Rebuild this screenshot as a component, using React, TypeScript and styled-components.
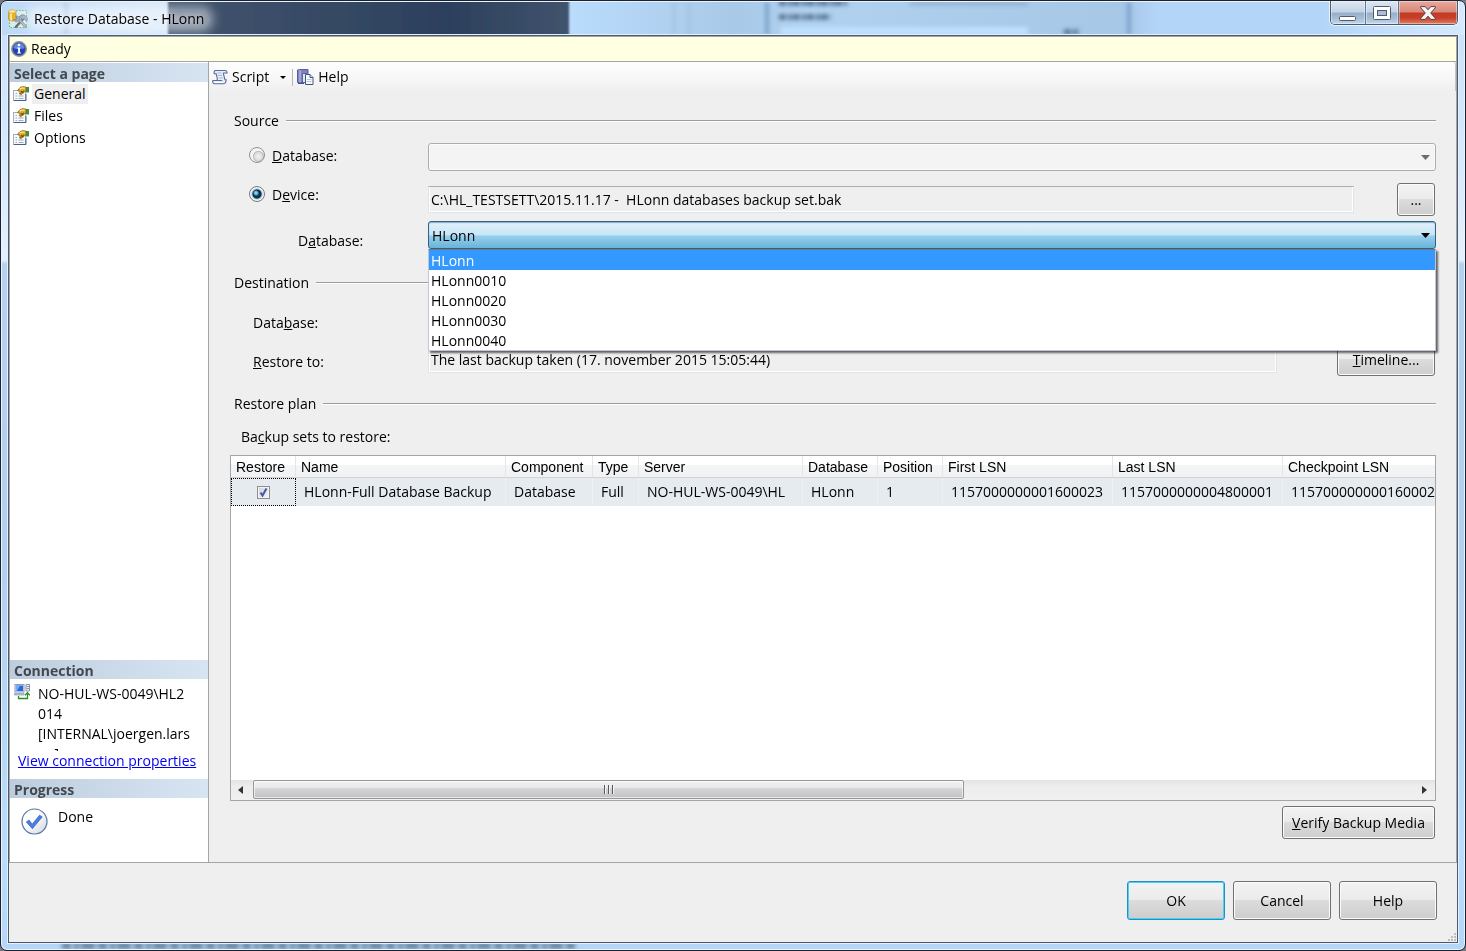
import React from "react";
import styled, { createGlobalStyle, css } from "styled-components";

const GlobalStyle = createGlobalStyle`
  *, *::before, *::after { box-sizing: border-box; }
  html { background: #77797d; }
  body {
    margin: 0;
    color: #000;
    font-family: "Open Sans", "Noto Sans", sans-serif;
    font-size: 14px;
    line-height: 20px;
  }
  button, input, select { font: inherit; color: inherit; }
`;

/* ---------- window frame ---------- */

const Frame = styled.div`
  position: relative;
  display: flex;
  flex-direction: column;
  min-height: 100vh;
  padding: 0 7px 7px;
  border: 1px solid #1b2130;
  border-radius: 7px;
  overflow: hidden;
  background: linear-gradient(#c9e0fa 0, #d3e7fc 120px, #e4f0fd 259px, #b4d1f0 263px, #b2d0ef 60%, #bbdcfc 90%, #b5d6f7 100%);
  box-shadow: inset 0 0 0 1px #eaf5ff;
`;

const Backdrop = styled.svg`
  position: absolute;
  left: 1px;
  width: 1462px;
`;

const TopBackdrop = styled(Backdrop)`
  top: 1px;
  height: 33px;
`;

const BottomBackdrop = styled(Backdrop)`
  bottom: 1px;
  height: 6px;
`;

const TitleBar = styled.header`
  position: relative;
  display: flex;
  align-items: flex-start;
  height: 34px;
`;

const Title = styled.h1`
  display: flex;
  flex: 1;
  align-items: center;
  gap: 6px;
  height: 34px;
  margin: 0;
  padding-top: 2px;
  font-size: 14px;
  font-weight: 400;
`;

const TitleText = styled.span`
  padding: 0 6px;
  margin-left: -6px;
  border-radius: 10px;
  background: rgba(255, 255, 255, 0.35);
  box-shadow: 0 0 10px 4px rgba(255, 255, 255, 0.4);
  text-shadow: 0 0 8px #fff, 0 0 8px #fff;
`;

const WindowControls = styled.div`
  display: flex;
  height: 24px;
  border: 1px solid #4a5a70;
  border-top: 0;
  border-radius: 0 0 5px 5px;
  overflow: hidden;
  box-shadow: 0 0 0 1px rgba(255, 255, 255, 0.7);
`;

const WindowButton = styled.button<{ $close?: boolean; $wide?: boolean }>`
  display: flex;
  align-items: center;
  justify-content: center;
  width: ${(p) => (p.$close ? 58 : p.$wide ? 35 : 33)}px;
  padding: 0;
  border: 0;
  border-right: ${(p) => (p.$close ? "0" : "1px solid #66788f")};
  background: ${(p) =>
    p.$close
      ? "linear-gradient(#e9a99c 0, #d9877a 48%, #c23a22 52%, #c9402a 75%, #dd8263 100%)"
      : "linear-gradient(#dce7f3 0, #c3d3e5 48%, #97b0ca 52%, #a5bcd6 75%, #c4d9ee 100%)"};
  box-shadow: inset 0 0 0 1px rgba(255, 255, 255, 0.4);
`;

const Client = styled.main`
  position: relative;
  display: flex;
  flex: 1;
  flex-direction: column;
  border: 1px solid #4f5b6b;
  background: #efefef;
  box-shadow: 0 0 0 1px #e2f1ff;
`;

const Body = styled.div`
  display: flex;
  flex: 1;
  flex-direction: column;
  border: 1px solid #a3a5ab;
`;

const StatusBar = styled.div`
  display: flex;
  align-items: center;
  gap: 4px;
  height: 25px;
  padding-left: 1px;
  border-bottom: 1px solid #a3a5ab;
  background: #ffffe1;
`;

const Columns = styled.div`
  display: flex;
  flex: 1;
`;

/* ---------- side panel ---------- */

const Sidebar = styled.aside`
  display: flex;
  flex-direction: column;
  width: 199px;
  padding-top: 1px;
  border-right: 1px solid #a3a5ab;
  background: #fff;
`;

const SectionTitle = styled.h2`
  height: 19px;
  margin: 0;
  padding-left: 4px;
  background: linear-gradient(90deg, #becddd, #d7e5f3);
  color: #40494f;
  font-size: 14px;
  font-weight: 700;
  line-height: 22px;
`;

const PageList = styled.nav`
  display: flex;
  flex: 1;
  flex-direction: column;
  gap: 2px;
  padding: 2px 3px;
`;

const PageLink = styled.a<{ $active?: boolean }>`
  display: flex;
  gap: 3px;
  align-items: center;
  height: 20px;
  color: #000;
  text-decoration: none;

  span {
    padding: 0 2px;
    background: ${(p) => (p.$active ? "#efefef" : "none")};
  }
`;

const Connection = styled.div`
  display: flex;
  align-items: flex-start;
  gap: 8px;
  height: 67px;
  margin-top: 5px;
  padding-left: 4px;
  overflow: hidden;

  p {
    width: 160px;
    margin: 0;
    white-space: pre;
  }
  svg { flex: none; }
`;

const ConnectionRow = styled.div`
  height: 28px;
  padding-left: 8px;
  white-space: nowrap;

  a { color: #0000f0; }
`;

const Progress = styled.div`
  display: flex;
  gap: 10px;
  height: 64px;
  padding: 9px 11px;

  svg { margin-top: 1px; }
`;

/* ---------- page content ---------- */

const Content = styled.section`
  display: flex;
  flex: 1;
  flex-direction: column;
  min-width: 0;
`;

const Toolbar = styled.div`
  display: flex;
  align-items: center;
  height: 29px;
  padding: 1px 0 0 3px;
  border-right: 1px solid #c4c4c4;
  border-radius: 0 3px 0 0;
  background: linear-gradient(#fdfdfd, #f8f8f8 50%, #efefef);
`;

const ToolButton = styled.button`
  display: flex;
  align-items: center;
  gap: 4px;
  padding: 0;
  border: 0;
  background: none;

  .arrow { margin-left: 7px; }
`;

const ToolDivider = styled.span`
  width: 1px;
  height: 17px;
  margin: 0 4px 0 6px;
  background: #b5b5b5;
`;

const Form = styled.form`
  display: flex;
  flex: 1;
  flex-direction: column;
  padding: 20px 20px 23px 25px;
`;

const GroupTitle = styled.h3<{ $top?: number }>`
  display: flex;
  align-items: center;
  gap: 7px;
  margin: ${(p) => p.$top || 0}px 0 0;
  font-size: 14px;
  font-weight: 400;

  &::after {
    content: "";
    flex: 1;
    height: 2px;
    border-top: 1px solid #9c9c9c;
    background: #fff;
  }
`;

const Row = styled.div<{ $top: number; $height: number }>`
  display: grid;
  grid-template-columns: 194px 1fr;
  align-items: start;
  height: ${(p) => p.$height}px;
  margin-top: ${(p) => p.$top}px;
`;

const Label = styled.label<{ $indent: number; $top: number }>`
  display: flex;
  gap: 7px;
  padding: ${(p) => p.$top}px 0 0 ${(p) => p.$indent}px;
`;

const Radio = styled.input`
  appearance: none;
  width: 16px;
  height: 16px;
  margin: 1px 0 0;
  border: 1px solid #8e8f8f;
  border-radius: 50%;
  background: radial-gradient(circle at 60% 60%, #f4f4f4 0, #d9dbdc 4px, #b9bcbf 5px, #f6f6f6 6px);

  &:checked {
    border-color: #6d7a85;
    background: radial-gradient(circle at 6px 6px, #b6ecff 0, #35a3d0 2px, transparent 3px),
      radial-gradient(circle, #164a6f 0, #0d2a44 4px, #a8b6c0 5px, #f6f6f6 6px);
  }
`;

const Field = styled.div`
  display: flex;
  align-items: center;
  justify-content: space-between;
  height: 33px;
  padding-right: 1px;
`;

const ReadOnlyInput = styled.input<{ $gap: number }>`
  flex: 1;
  height: 27px;
  min-width: 0;
  margin-right: ${(p) => p.$gap}px;
  padding: 0 2px;
  border: 1px solid #dfe3ec;
  border-top-color: #abadb3;
  background: #efefef;
  box-shadow: inset -1px -1px 0 #fff, inset 1px 0 0 #fff;
  outline: 0;
`;

const Combo = styled.div`
  position: relative;
  height: 28px;

  > svg {
    position: absolute;
    top: 12px;
    right: 6px;
    pointer-events: none;
  }
`;

const Select = styled.select<{ $open?: boolean }>`
  appearance: none;
  display: block;
  width: 100%;
  height: 28px;
  padding: 2px 3px 0;
  border: 1px solid #acacac;
  border-radius: 3px;
  background: #f4f4f4;
  box-shadow: inset 0 0 0 1px #fbfbfb;
  outline: 0;
  opacity: 1;

  ${(p) =>
    p.$open &&
    css`
      border-color: #2c628b;
      background: linear-gradient(#e3f1fa 0, #c7e6f6 50%, #98d0ec 53%, #68b3db 100%);
      box-shadow: inset 0 1px 1px #88a9c0;
    `}
`;

const Options = styled.ul`
  position: absolute;
  z-index: 2;
  top: 28px;
  left: 0;
  right: 0;
  margin: 0;
  padding: 0;
  border: 1px solid #c0c6d8;
  border-top-color: #777;
  background: #fff;
  box-shadow: 2px 2px 2px rgba(0, 0, 0, 0.6);
  list-style: none;
`;

const Option = styled.li<{ $selected?: boolean }>`
  height: 20px;
  padding: 0 2px;
  background: ${(p) => (p.$selected ? "#3399ff" : "none")};
  color: ${(p) => (p.$selected ? "#fff" : "#000")};
  line-height: 22px;
`;

const Button = styled.button<{ $width: number; $height?: number; $default?: boolean }>`
  width: ${(p) => p.$width}px;
  height: ${(p) => p.$height || 33}px;
  padding: 0;
  border: 1px solid ${(p) => (p.$default ? "#2a8dbd" : "#707070")};
  border-radius: 3px;
  background: linear-gradient(#f3f3f3 0, #ebebeb 48%, #dcdcdc 50%, #cdcdcd 100%);
  box-shadow: inset 0 0 0 1px ${(p) => (p.$default ? "#43d3fa" : "#fbfbfb")};
  white-space: nowrap;
`;

const TableCaption = styled.div`
  margin-top: 13px;
  padding-left: 7px;
`;

/* ---------- backup set grid ---------- */

const GridBox = styled.div`
  display: flex;
  flex: 1;
  flex-direction: column;
  min-height: 200px;
  margin: 8px 0 5px -4px;
  border: 1px solid #a3a5ab;
  background: #fff;
`;

const GridView = styled.div`
  flex: 1;
  overflow: hidden;
`;

const Table = styled.table`
  width: 1222px;
  table-layout: fixed;
  border-collapse: separate;
  border-spacing: 0;

  th, td {
    padding: 0 0 0 5px;
    overflow: hidden;
    text-align: left;
    white-space: nowrap;
    font-weight: 400;
    border-right: 1px solid #e3e5e8;
  }
  th {
    height: 22px;
    border-bottom: 1px solid #d0d2d5;
    background: linear-gradient(#fff 40%, #f4f5f7 45%, #f1f2f4);
    font-family: "Liberation Sans", sans-serif;
    font-size: 14px;
  }
  td {
    height: 28px;
    padding-left: 8px;
    border-right-color: #f0f0f0;
    background: #e6ebf0;
  }
  td:first-child {
    padding: 0;
    border: 1px dotted #000;
    text-align: center;
    line-height: 0;
  }
`;

const Checkbox = styled.input`
  appearance: none;
  width: 13px;
  height: 13px;
  margin: 0;
  border: 1px solid #8e8f8f;
  background: linear-gradient(135deg, #cfd4da, #f6f6f6);
  box-shadow: inset 0 0 0 1px #f4f4f4;
`;

const CheckWrap = styled.label`
  display: inline-grid;

  > * { grid-area: 1 / 1; }
  svg { pointer-events: none; }
`;

const ScrollBar = styled.div`
  display: flex;
  height: 20px;
  background: linear-gradient(#e3e3e3, #ededed 30%, #f0f0f0);
`;

const ScrollArrow = styled.button`
  display: flex;
  align-items: center;
  justify-content: center;
  width: 22px;
  padding: 0;
  border: 0;
  background: none;

  &:first-child { padding-right: 3px; }
`;

const ScrollTrack = styled.div`
  flex: 1;
`;

const ScrollThumb = styled.div`
  display: flex;
  align-items: center;
  justify-content: center;
  width: 61.3%;
  height: 19px;
  border: 1px solid #979797;
  border-radius: 2px;
  background: linear-gradient(#f3f3f3, #e8e8e9 40%, #d5d5d8 45%, #c2c2c6);
  box-shadow: inset 0 0 0 1px rgba(255, 255, 255, 0.6);
`;

const VerifyRow = styled.div`
  display: flex;
  justify-content: flex-end;
  padding-right: 1px;
`;

const Footer = styled.footer`
  display: flex;
  justify-content: flex-end;
  gap: 8px;
  height: 79px;
  padding: 18px 20px 0;
`;

const Grip = styled.svg`
  position: absolute;
  right: 0;
  bottom: 0;
`;

/* ---------- icons ---------- */

const AppIcon = () => (
  <svg width="20" height="20" viewBox="0 0 20 20" aria-hidden="true">
    <path d="M8 1.500H18.500V18.500H1.500V11" fill="#f4faf2" fillOpacity=".5" stroke="#5cc04c" strokeDasharray="1.500 1.500" />
    <path d="M.5 2.500v7.500c0 1.200 1.600 2 3.800 2s3.700-.8 3.700-2V2.500z" fill="#e8b42a" stroke="#b98714" strokeWidth=".6" />
    <path d="M2 4v7.300c.6.300 1.200.4 2 .4V4z" fill="#fbe58e" />
    <ellipse cx="4.200" cy="2.500" rx="3.700" ry="1.700" fill="#fbe9a0" stroke="#c49726" strokeWidth=".6" />
    <path d="M8 17.800l7.500-8" stroke="#70665c" strokeWidth="2.400" strokeLinecap="round" />
    <path d="M9.500 9L17.500 17.500" stroke="#8194a8" strokeWidth="2.800" strokeLinecap="round" />
    <path d="M10 9.500l7 7.500" stroke="#c9d5e2" strokeWidth=".9" strokeLinecap="round" />
    <path d="M5.500 10.500l2.800.2.800-1.200-1.200-2.500c1.800-.4 3.600.8 3.800 2.600.1 1.800-1.300 3.200-3 3.200-1.500 0-2.700-.9-3.200-2.300z" fill="#9fb0c3" stroke="#66798f" strokeWidth=".6" />
    <path d="M11.500 7.500c2-2.300 5-2.200 7 .3.700 1 1 2.200.8 3.700l-1.600.2-1-1.900-2.700.4z" fill="#98a9be" stroke="#5d7088" strokeWidth=".7" />
  </svg>
);

const InfoIcon = () => (
  <svg width="16" height="16" viewBox="0 0 16 16" aria-hidden="true">
    <circle cx="8" cy="8" r="7.200" fill="#2343b4" stroke="#8e9097" strokeWidth="1.500" />
    <path d="M2.300 7a5.800 5.800 0 0 1 11.400 0c-3 1.500-8.400 1.500-11.400 0z" fill="#5f86e0" />
    <circle cx="8" cy="4" r="1.300" fill="#fff" />
    <path d="M6.200 6.500H9v5h1v1.100H6.200v-1.100h.9V7.600h-.9z" fill="#fff" />
  </svg>
);

const PageIcon = () => (
  <svg width="16" height="16" viewBox="0 0 16 16" aria-hidden="true">
    <rect x=".5" y="4.500" width="12" height="10" fill="#f6f8fc" stroke="#a4adbb" />
    <path d="M1 14.500h12V8" fill="none" stroke="#4b5f80" />
    <path d="M2.500 7.500h1.500M2.500 10h1.500M2.500 12.500h1.500M5.500 10h5M5.500 12.500h5" stroke="#9aabc8" />
    <path d="M13 1h3v5.500h-3z" fill="#399448" />
    <path d="M4.500 4.500L7 1.600c2-1.200 4-1 6.200-.4v3.600L11 6 8.200 8.400 6.500 8l.8-2.400z" fill="#e0ac23" stroke="#7e5a09" strokeWidth=".8" />
    <path d="M6.800 3c1.500-1.200 3.200-1.200 5-.7" stroke="#fff0a5" strokeWidth="1.100" fill="none" />
    <path d="M7.500 7.600L11 4.800M8 5l2.500 2" stroke="#4d3706" strokeWidth=".8" />
  </svg>
);

const ScriptIcon = () => (
  <svg width="16" height="16" viewBox="0 0 16 16" aria-hidden="true">
    <path d="M3.500 1H13c1.500 0 2.300 1 2.200 2.500-.1.800-.5 1-1.200 1h-2c-.2 1.500 1 3 1 5h1c.8.500 1 1.500.6 3-.4 1.700-1.300 2.500-2.800 2.500H2.500C1 15 .3 13.800.6 12.200c.1-.6.400-.9 1-.9h3.200c.7-1.800-.6-3.300-1-5.300H2.500C1.200 5 1.300 1.500 3.500 1z" fill="#e6edf9" />
    <path d="M3 1.500h10.500c1 .2 1.700 1 1.600 2.500h-3.600c-.3 2 1.200 4 1.200 6.500M3 1.500c-1 .7-1.300 2.300-.5 3.300h1.700c.3 2.700 1.800 4.300.8 6.700M.8 11.500h9.500M.8 11.500c-.4 1.500.2 3 1.500 3.300h9.200c1.700-.2 2.600-1.800 2.700-4h-1.500" fill="none" stroke="#5a6c93" strokeWidth="1.100" />
    <path d="M5.500 4h4M6 6.500h4M7 9h4" stroke="#a4b5d8" />
    <path d="M2.500 13.500h8.500" stroke="#fff" />
  </svg>
);

const HelpIcon = () => (
  <svg width="17" height="16" viewBox="0 0 17 16" aria-hidden="true">
    <path d="M.5 1l2-.5h8.500v13H.5z" fill="#7f82c2" stroke="#595ca0" />
    <path d="M1 14.500h6" stroke="#4a4c8c" />
    <path d="M3 1v12.500" stroke="#c3c5ea" />
    <path d="M5.500 4.500H10l1 1v8H5.500z" fill="#dfe7f4" stroke="#57698c" />
    <path d="M8.500 5.500H13l3 3v7H8.500z" fill="#f8fafe" stroke="#41597f" />
    <path d="M13 5.500v3h3" fill="#ccd8ec" stroke="#41597f" />
    <path d="M10 10.500h4.500M10 12.500h4.500" stroke="#b6c4dc" />
  </svg>
);

const ServerIcon = () => (
  <svg width="16" height="16" viewBox="0 0 16 16" aria-hidden="true">
    <rect x="1" y=".5" width="9" height="7.500" fill="#dfe5f1" stroke="#8b9bbb" />
    <rect x="2" y="1.500" width="7" height="5.500" fill="#2569e0" />
    <path d="M2 1.500h4L3 7H2z" fill="#76acf7" />
    <path d="M.5 9.500h9.500v1.500H.5z" fill="#c3cbda" stroke="#8794b0" strokeWidth=".7" />
    <path d="M12 .5h3.500v6.500H12z" fill="#eef1f6" stroke="#8793a6" />
    <path d="M12.500 2.500h2.500M12.500 4.500h2.500" stroke="#8c99ad" />
    <path d="M4.500 12v2.500h9V9.500M11 11.300l2.500-2.700 2.400 2.700" fill="none" stroke="#2d8f1f" strokeWidth="1.300" />
  </svg>
);

const DoneIcon = () => (
  <svg width="27" height="27" viewBox="0 0 27 27" aria-hidden="true">
    <defs>
      <linearGradient id="done" x1="0" y1="0" x2="1" y2="1">
        <stop offset=".4" stopColor="#fff" />
        <stop offset="1" stopColor="#cfd3da" />
      </linearGradient>
    </defs>
    <circle cx="13.500" cy="13.500" r="12.500" fill="url(#done)" stroke="#5673a6" strokeWidth="1.200" />
    <path d="M5.300 14l2.700-2 3.200 4.200L18.600 7.200l2.600 1.700-9.800 11.800z" fill="#4a7ee4" stroke="#2c5cc0" strokeWidth=".7" />
  </svg>
);

const Arrow = ({ color = "#000" }: { color?: string }) => (
  <svg width="9" height="5" viewBox="0 0 9 5" aria-hidden="true">
    <path d="M0 0h9L4.500 5z" fill={color} />
  </svg>
);

/* ---------- data ---------- */

const pages = ["General", "Files", "Options"];
const databases = ["HLonn", "HLonn0010", "HLonn0020", "HLonn0030", "HLonn0040"];
const columns: [string, number, string][] = [
  ["Name", 210, "HLonn-Full Database Backup"],
  ["Component", 87, "Database"],
  ["Type", 46, "Full"],
  ["Server", 164, "NO-HUL-WS-0049\\HL"],
  ["Database", 75, "HLonn"],
  ["Position", 65, "1"],
  ["First LSN", 170, "1157000000001600023"],
  ["Last LSN", 170, "1157000000004800001"],
  ["Checkpoint LSN", 170, "115700000000160002"],
];

export default function App() {
  return (
    <>
      <GlobalStyle />
      <Frame>
        <TopBackdrop viewBox="0 0 1462 33" aria-hidden="true">
          <defs>
            <linearGradient id="glass">
              <stop offset="0" stopColor="#bcd9f8" />
              <stop offset=".1" stopColor="#d5e6f8" />
              <stop offset=".39" stopColor="#badcfc" />
              <stop offset=".5" stopColor="#a9c9e8" />
              <stop offset=".55" stopColor="#b1d1f1" />
              <stop offset=".77" stopColor="#a7c7e7" />
              <stop offset=".79" stopColor="#b3d5f8" />
              <stop offset=".9" stopColor="#b3d5f8" />
              <stop offset="1" stopColor="#d6e9fe" />
            </linearGradient>
            <linearGradient id="navy">
              <stop offset="0" stopColor="#43556f" />
              <stop offset=".7" stopColor="#2c405c" />
              <stop offset="1" stopColor="#41536d" />
            </linearGradient>
            <filter id="soft" x="-20%" y="-50%" width="140%" height="200%">
              <feGaussianBlur stdDeviation="2" />
            </filter>
            <filter id="edge" x="-2%" y="-20%" width="104%" height="140%">
              <feGaussianBlur stdDeviation="1" />
            </filter>
          </defs>
          <path d="M0 0h1462v33H0z" fill="url(#glass)" />
          <path d="M166 -5h401v43H166z" fill="url(#navy)" filter="url(#edge)" />
          <g filter="url(#soft)">
            <path d="M62 0h4v33h-4zM671 0h2v33h-2zM686 0h2v33h-2z" fill="#94b2d0" opacity=".6" />
            <path d="M763 0h4v33h-4zM1125 0h4v33h-4z" fill="#7ba3c9" />
            <path d="M779 25h247v8H779z" fill="#c0e0ff" />
            <path d="M908 0h118v3H908z" fill="#8eabc8" />
            <path d="M777 15h52M777 1h68M1062 30h15" stroke="#4f6c88" strokeWidth="5" strokeDasharray="7 2 4 1" />
          </g>
        </TopBackdrop>
        <BottomBackdrop viewBox="0 0 1462 6" aria-hidden="true">
          <path d="M60 3h516" stroke="#56748f" strokeWidth="5" strokeDasharray="9 3 5 2 14 3" filter="url(#edgeLine)" />
          <defs>
            <filter id="edgeLine" filterUnits="userSpaceOnUse" x="0" y="-4" width="700" height="14">
              <feGaussianBlur stdDeviation="2" />
            </filter>
          </defs>
        </BottomBackdrop>

        <TitleBar>
          <Title>
            <AppIcon />
            <TitleText>Restore Database - HLonn</TitleText>
          </Title>
          <WindowControls>
            <WindowButton $wide aria-label="Minimize">
              <svg width="18" height="22" viewBox="0 0 18 22">
                <rect x=".5" y="14.500" width="16" height="4" rx="1" fill="#fff" stroke="#505b6b" />
              </svg>
            </WindowButton>
            <WindowButton aria-label="Maximize">
              <svg width="18" height="14" viewBox="0 0 18 14">
                <rect x=".5" y=".5" width="17" height="13" rx="1" fill="#fff" stroke="#505b6b" />
                <rect x="4.500" y="4.500" width="9" height="5" fill="#a9bed6" stroke="#505b6b" />
              </svg>
            </WindowButton>
            <WindowButton $close aria-label="Close">
              <svg width="16" height="14" viewBox="0 0 16 14">
                <path d="M.7.600h4.500L8 3.800 10.800.600h4.500v1.200L10.700 7l4.600 5.200v1.200h-4.500L8 10.200l-2.800 3.200H.7v-1.200L5.300 7 .7 1.800z" fill="#f4f4f4" stroke="#5a3c44" />
              </svg>
            </WindowButton>
          </WindowControls>
        </TitleBar>

        <Client>
          <Body>
            <StatusBar role="status">
              <InfoIcon />
              Ready
            </StatusBar>
            <Columns>
              <Sidebar>
                <SectionTitle>Select a page</SectionTitle>
                <PageList>
                  {pages.map((page, i) => (
                    <PageLink key={page} href={"#" + page} $active={i === 0}>
                      <PageIcon />
                      <span>{page}</span>
                    </PageLink>
                  ))}
                </PageList>
                <SectionTitle>Connection</SectionTitle>
                <Connection>
                  <ServerIcon />
                  <p>{"NO-HUL-WS-0049\\HL2\n014\n[INTERNAL\\joergen.lars\nen]"}</p>
                </Connection>
                <ConnectionRow>
                  <a href="#connection">View connection properties</a>
                </ConnectionRow>
                <SectionTitle>Progress</SectionTitle>
                <Progress>
                  <DoneIcon />
                  Done
                </Progress>
              </Sidebar>

              <Content>
                <Toolbar>
                  <ToolButton>
                    <ScriptIcon />
                    Script
                    <svg className="arrow" width="6" height="3" viewBox="0 0 6 3" aria-hidden="true">
                      <path d="M0 0h6L3 3z" />
                    </svg>
                  </ToolButton>
                  <ToolDivider />
                  <ToolButton>
                    <HelpIcon />
                    Help
                  </ToolButton>
                </Toolbar>

                <Form>
                  <GroupTitle>Source</GroupTitle>
                  <Row $top={12} $height={28}>
                    <Label $indent={15} $top={3}>
                      <Radio type="radio" name="source" />
                      <span><u>D</u>atabase:</span>
                    </Label>
                    <Combo>
                      <Select disabled aria-label="Source database" />
                      <Arrow color="#6d6d6d" />
                    </Combo>
                  </Row>
                  <Row $top={12} $height={33}>
                    <Label $indent={15} $top={2}>
                      <Radio type="radio" name="source" defaultChecked />
                      <span>D<u>e</u>vice:</span>
                    </Label>
                    <Field>
                      <ReadOnlyInput
                        $gap={43}
                        readOnly
                        aria-label="Device path"
                        defaultValue={"C:\\HL_TESTSETT\\2015.11.17 -  HLonn databases backup set.bak"}
                      />
                      <Button type="button" $width={38} aria-label="Browse">...</Button>
                    </Field>
                  </Row>
                  <Row $top={5} $height={30}>
                    <Label htmlFor="device-db" $indent={64} $top={10}>
                      <span>D<u>a</u>tabase:</span>
                    </Label>
                    <Combo>
                      <Select id="device-db" $open defaultValue="HLonn">
                        {databases.map((db) => (
                          <option key={db}>{db}</option>
                        ))}
                      </Select>
                      <Arrow />
                      <Options role="listbox" aria-label="Databases">
                        {databases.map((db, i) => (
                          <Option key={db} role="option" aria-selected={i === 0} $selected={i === 0}>
                            {db}
                          </Option>
                        ))}
                      </Options>
                    </Combo>
                  </Row>

                  <GroupTitle $top={22}>Destination</GroupTitle>
                  <Row $top={16} $height={28}>
                    <Label htmlFor="target-db" $indent={19} $top={4}>
                      <span>Data<u>b</u>ase:</span>
                    </Label>
                    <Combo>
                      <Select id="target-db" />
                    </Combo>
                  </Row>
                  <Row $top={6} $height={33}>
                    <Label htmlFor="restore-to" $indent={19} $top={9}>
                      <span><u>R</u>estore to:</span>
                    </Label>
                    <Field>
                      <ReadOnlyInput
                        id="restore-to"
                        $gap={60}
                        readOnly
                        defaultValue="The last backup taken (17. november 2015 15:05:44)"
                      />
                      <Button type="button" $width={98}><u>T</u>imeline...</Button>
                    </Field>
                  </Row>

                  <GroupTitle $top={18}>Restore plan</GroupTitle>
                  <TableCaption id="sets">Ba<u>c</u>kup sets to restore:</TableCaption>
                  <GridBox>
                    <GridView>
                      <Table aria-labelledby="sets">
                        <colgroup>
                          <col style={{ width: 65 }} />
                          {columns.map(([name, width]) => (
                            <col key={name} style={{ width }} />
                          ))}
                        </colgroup>
                        <thead>
                          <tr>
                            <th>Restore</th>
                            {columns.map(([name]) => (
                              <th key={name}>{name}</th>
                            ))}
                          </tr>
                        </thead>
                        <tbody>
                          <tr>
                            <td>
                              <CheckWrap>
                                <Checkbox type="checkbox" defaultChecked aria-label="Restore this backup set" />
                                <svg width="13" height="13" viewBox="0 0 13 13" aria-hidden="true">
                                  <path d="M3.500 6.500l2 3 4-7" fill="none" stroke="#4459a5" strokeWidth="2" />
                                </svg>
                              </CheckWrap>
                            </td>
                            {columns.map(([name, , value]) => (
                              <td key={name}>{value}</td>
                            ))}
                          </tr>
                        </tbody>
                      </Table>
                    </GridView>
                    <ScrollBar>
                      <ScrollArrow type="button" aria-label="Scroll left">
                        <svg width="5" height="8" viewBox="0 0 5 8"><path d="M5 0v8L0 4z" fill="#333" /></svg>
                      </ScrollArrow>
                      <ScrollTrack>
                        <ScrollThumb>
                          <svg width="11" height="9" viewBox="0 0 11 9" aria-hidden="true">
                            <path d="M1.500 0v9M5.500 0v9M9.500 0v9" stroke="#55585c" />
                            <path d="M2.500 0v9M6.500 0v9M10.500 0v9" stroke="#f4f4f4" />
                          </svg>
                        </ScrollThumb>
                      </ScrollTrack>
                      <ScrollArrow type="button" aria-label="Scroll right">
                        <svg width="5" height="8" viewBox="0 0 5 8"><path d="M0 0v8l5-4z" fill="#333" /></svg>
                      </ScrollArrow>
                    </ScrollBar>
                  </GridBox>
                  <VerifyRow>
                    <Button type="button" $width={153}><u>V</u>erify Backup Media</Button>
                  </VerifyRow>
                </Form>
              </Content>
            </Columns>
          </Body>
          <Footer>
            <Button $width={98} $height={39} $default>OK</Button>
            <Button $width={98} $height={39}>Cancel</Button>
            <Button $width={98} $height={39}>Help</Button>
          </Footer>
          <Grip width="10" height="10" viewBox="0 0 10 10" aria-hidden="true">
            <path d="M7 1h2v2H7zM4 4h2v2H4zM7 4h2v2H7zM1 7h2v2H1zM4 7h2v2H4zM7 7h2v2H7z" fill="#bdbdbd" />
          </Grip>
        </Client>
      </Frame>
    </>
  );
}
